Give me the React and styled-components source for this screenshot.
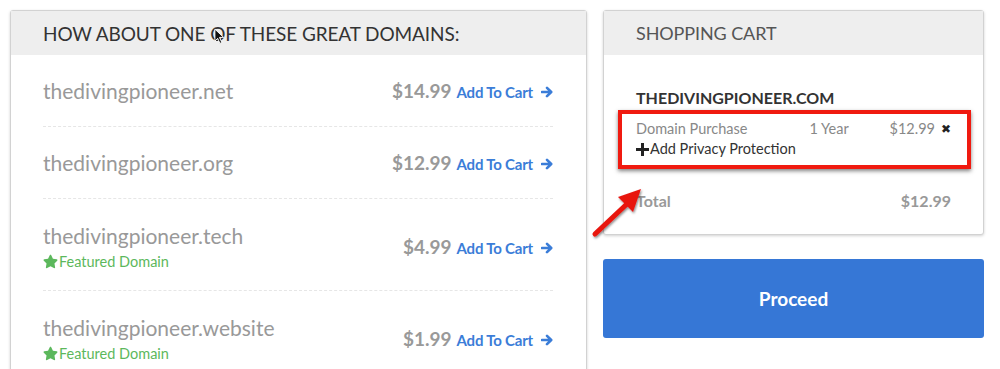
import React from 'react'
import styled, { createGlobalStyle } from 'styled-components'

const Global = createGlobalStyle`
  html, body { margin: 0; padding: 0; background: #fff; }
  body { font-family: Lato, "Open Sans", sans-serif; }
`

const domains = [
  { name: 'thedivingpioneer.net', price: 14.99 },
  { name: 'thedivingpioneer.org', price: 12.99 },
  { name: 'thedivingpioneer.tech', price: 4.99, featured: true },
  { name: 'thedivingpioneer.website', price: 1.99, featured: true },
]

const Arrow = () => (
  <svg width="12" height="12" viewBox="0 0 12 12">
    <path d="M1 6h9M6 1.8L10.2 6 6 10.2" fill="none" stroke="currentColor" strokeWidth="2.6" strokeLinecap="round" strokeLinejoin="round" />
  </svg>
)

const Star = () => (
  <svg width="15" height="15" viewBox="0 0 576 512">
    <path fill="currentColor" d="M259.3 17.8L194 150.2 47.9 171.5c-26.2 3.8-36.7 36.1-17.7 54.6l105.7 103-25 145.5c-4.5 26.3 23.2 46 46.4 33.7L288 439.6l130.7 68.7c23.2 12.2 50.9-7.4 46.4-33.7l-25-145.5 105.7-103c19-18.5 8.5-50.8-17.7-54.6L382 150.2 316.7 17.8c-11.7-23.6-45.6-23.9-57.4 0z" />
  </svg>
)

const App = () => {
  return (
    <Page>
      <Global />
      <Column>
        <Panel>
          <PanelHead>
            How about one of these great domains:
            <Cursor viewBox="0 0 12 18" width="11" height="17">
              <path d="M1 1 L1 14 L4 11 L6.5 16.5 L8.5 15.5 L6 10 L10.5 10 Z" fill="#111" stroke="#fff" strokeWidth="1" />
            </Cursor>
          </PanelHead>
          <List>
            {domains.map((d) => (
              <Row key={d.name} tall={d.featured}>
                <Name>
                  <Domain>{d.name}</Domain>
                  {d.featured && (
                    <Featured>
                      <Star />
                      Featured Domain
                    </Featured>
                  )}
                </Name>
                <Buy>
                  <Price>${d.price.toFixed(2)}</Price>
                  <AddLink>
                    Add To Cart
                    <Arrow />
                  </AddLink>
                </Buy>
              </Row>
            ))}
          </List>
        </Panel>
      </Column>

      <Side>
        <Panel>
          <PanelHead light>Shopping Cart</PanelHead>
          <CartBody>
            <CartDomain>thedivingpioneer.com</CartDomain>
            <Highlight>
              <ItemLine>
                <span>Domain Purchase</span>
                <Term>1 Year</Term>
                <span>$12.99</span>
                <Remove>✖</Remove>
              </ItemLine>
              <Privacy>
                <svg width="13" height="13" viewBox="0 0 13 13">
                  <path d="M5 0h3v5h5v3H8v5H5V8H0V5h5z" fill="#222" />
                </svg>
                Add Privacy Protection
              </Privacy>
            </Highlight>
            <TotalLine>
              <span>Total</span>
              <span>$12.99</span>
            </TotalLine>
            <Pointer width="60" height="60" viewBox="0 0 60 60">
              <defs>
                <filter id="sh" x="-30%" y="-30%" width="160%" height="160%">
                  <feDropShadow dx="1" dy="1.5" stdDeviation="1.2" floodColor="#000" floodOpacity="0.45" />
                </filter>
              </defs>
              <g filter="url(#sh)">
                <line x1="6" y1="54" x2="40" y2="22" stroke="#e8150f" strokeWidth="5" strokeLinecap="round" />
                <polygon points="52,9 44,32 29,17" fill="#e8150f" />
              </g>
            </Pointer>
          </CartBody>
        </Panel>
        <Proceed>Proceed</Proceed>
      </Side>
    </Page>
  )
}

export default App

const Page = styled.div`
  display: flex;
  gap: 16px;
  padding: 10px 16px 0 10px;
  height: 369px;
  box-sizing: border-box;
  overflow: hidden;
`
const Column = styled.div`
  width: 577px;
`
const Side = styled.div`
  width: 381px;
  display: flex;
  flex-direction: column;
  gap: 24px;
`
const Panel = styled.div`
  border: 1px solid #d2d2d2;
  border-radius: 3px;
  box-shadow: 0 1px 3px rgba(0, 0, 0, 0.18);
  background: #fff;
`
const PanelHead = styled.div`
  position: relative;
  background: #eeeeee;
  height: 44px;
  display: flex;
  align-items: center;
  padding-left: 32px;
  text-transform: uppercase;
  font-size: ${(p) => (p.light ? '18px' : '19px')};
  color: ${(p) => (p.light ? '#555' : '#333')};
  letter-spacing: -0.1px;
`
const Cursor = styled.svg`
  position: absolute;
  left: 203px;
  top: 17px;
`
const List = styled.div`
  padding: 0 33px 0 32px;
`
const Row = styled.div`
  display: flex;
  align-items: center;
  justify-content: space-between;
  height: ${(p) => (p.tall ? '92px' : '72px')};
  padding-top: ${(p) => (p.tall ? '4px' : '0')};
  border-bottom: 1px dashed #e6e6e6;
  box-sizing: border-box;
`
const Name = styled.div`
  display: flex;
  flex-direction: column;
`
const Domain = styled.span`
  font-size: 21px;
  color: #999;
  line-height: 28px;
`
const Featured = styled.span`
  display: flex;
  align-items: center;
  gap: 1px;
  margin-top: 2px;
  font-size: 14.5px;
  color: #5cb85c;
  line-height: 20px;
`
const Buy = styled.div`
  display: flex;
  align-items: baseline;
  gap: 5px;
`
const Price = styled.span`
  font-size: 19px;
  font-weight: 700;
  color: #999;
`
const AddLink = styled.span`
  display: flex;
  align-items: center;
  gap: 8px;
  font-size: 15px;
  font-weight: 700;
  color: #3b7dd8;
  letter-spacing: -0.2px;
`
const CartBody = styled.div`
  position: relative;
  padding: 33px 32px 24px 32px;
`
const CartDomain = styled.div`
  font-size: 16px;
  font-weight: 700;
  text-transform: uppercase;
  color: #333;
  line-height: 20px;
`
const Highlight = styled.div`
  margin: 2px -20px 0 -18px;
  padding: 5px 16px 6px 14px;
  border: 4px solid #f01a10;
  box-shadow: 0 2px 4px rgba(0, 0, 0, 0.5);
`
const ItemLine = styled.div`
  display: flex;
  align-items: center;
  font-size: 14.5px;
  color: #888;
  line-height: 20px;
`
const Term = styled.span`
  margin-left: auto;
  width: 80px;
`
const Remove = styled.span`
  margin-left: 6px;
  font-size: 12px;
  color: #222;
`
const Privacy = styled.div`
  display: flex;
  align-items: center;
  gap: 1px;
  font-size: 14.5px;
  color: #333;
  line-height: 20px;
`
const TotalLine = styled.div`
  display: flex;
  justify-content: space-between;
  margin-top: 22px;
  font-size: 16px;
  font-weight: 700;
  color: #999;
`
const Pointer = styled.svg`
  position: absolute;
  left: -15px;
  top: 125px;
  overflow: visible;
`
const Proceed = styled.button`
  height: 79px;
  border: none;
  border-radius: 3px;
  background: #3677d6;
  color: #fff;
  font-family: Lato, sans-serif;
  font-size: 19px;
  font-weight: 700;
`
